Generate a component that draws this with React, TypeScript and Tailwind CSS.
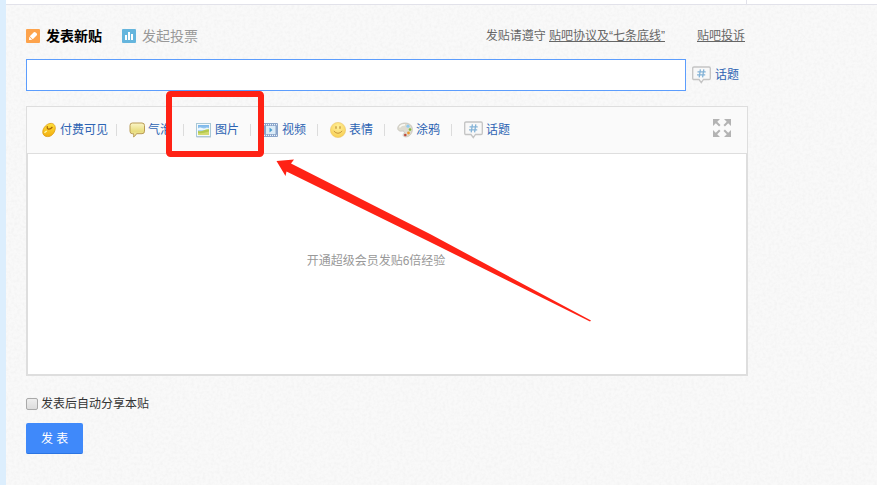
import type { ReactNode } from 'react';

const PencilIcon = () => (
  <svg width="14" height="14" viewBox="0 0 14 14" className="shrink-0">
    <rect width="14" height="14" rx="1" fill="#fda34c" />
    <path d="M3 11 L3.3 7.8 L6.2 10.7 Z M3.8 7.2 L7.8 3.2 Q8.7 2.5 9.7 3.4 L10.6 4.3 Q11.5 5.3 10.8 6.2 L6.8 10.2 Z" fill="#fff" />
  </svg>
);

const PollIcon = () => (
  <svg width="14" height="14" viewBox="0 0 14 14" className="shrink-0">
    <rect width="14" height="14" rx="1" fill="#65b5dd" />
    <path d="M3 6h2v5h-2z M6 3h2v8h-2z M9 5h2v6h-2z" fill="#fff" />
  </svg>
);

const TopicIcon = () => (
  <svg width="19" height="18" viewBox="0 0 19 18" className="shrink-0">
    <path
      d="M2 1 H17 Q18.3 1 18.3 2.3 V12.2 Q18.3 13.5 17 13.5 H11.5 L9.3 16.7 L7 13.5 H2 Q.7 13.5 .7 12.2 V2.3 Q.7 1 2 1 Z"
      fill="#f8f8f8"
      stroke="#c4c4c4"
      strokeWidth="1.3"
    />
    <path d="M8.4 3.4 L7.2 11.4 M11.8 3.4 L10.6 11.4 M5.5 5.8 H13.7 M5 8.9 H13.2" stroke="#84b3d7" strokeWidth="1.3" fill="none" />
  </svg>
);

const BeanIcon = () => (
  <svg width="16" height="16" viewBox="0 0 16 16">
    <defs>
      <linearGradient id="bean" x1="0" y1="0" x2="0" y2="1">
        <stop offset="0" stopColor="#ffe03a" />
        <stop offset="1" stopColor="#f2ae10" />
      </linearGradient>
    </defs>
    <path d="M9 1.5 C12.5 .8 14.8 3.4 14.2 7.2 C13.4 11.4 10.3 14.8 6.5 14.6 C3 14.4 1.4 12.2 1.8 9.2 C2.3 5.5 5.5 2 9 1.5 Z" fill="url(#bean)" stroke="#dc9b10" strokeWidth=".8" />
    <path d="M6.4 4.2 C5.4 7.6 8.6 8.4 11.4 5" stroke="#a66408" strokeWidth="1.2" fill="none" />
    <path d="M3.6 11 Q4.2 9.4 6 9.2" stroke="#fff4a0" strokeWidth="1.3" fill="none" />
  </svg>
);

const BubbleIcon = () => (
  <svg width="16" height="16" viewBox="0 0 16 16">
    <defs>
      <linearGradient id="bubble" x1="0" y1="0" x2="0" y2="1">
        <stop offset="0" stopColor="#fbf6c9" />
        <stop offset=".6" stopColor="#e8dc7e" />
        <stop offset="1" stopColor="#f2ebaa" />
      </linearGradient>
    </defs>
    <path d="M3.3 1 H13 Q15.5 1 15.5 3.5 V9.2 Q15.5 11.7 13 11.7 H7.5 Q6.8 13.8 4.5 14.9 Q5.1 13 4.5 11.7 H3.3 Q1 11.7 1 9.2 V3.5 Q1 1 3.3 1 Z" fill="url(#bubble)" stroke="#b99b55" strokeWidth="1" />
  </svg>
);

const PictureIcon = () => (
  <svg width="16" height="16" viewBox="0 0 16 16">
    <defs>
      <linearGradient id="sky" x1="0" y1="0" x2="0" y2="1">
        <stop offset="0" stopColor="#7ab6ea" />
        <stop offset="1" stopColor="#d7eefa" />
      </linearGradient>
    </defs>
    <rect x=".5" y="1.5" width="14" height="13" fill="#f4fafc" stroke="#a9c8d6" />
    <path d="M.5 15.3 H15" stroke="#c9d3da" strokeWidth=".8" />
    <rect x="2" y="3" width="11" height="10" fill="url(#sky)" />
    <path d="M2 6.5 Q4 4.8 6 6 T11 5.5 L13 6.5 V8 H2 Z" fill="#eef8fc" />
    <path d="M2 9 Q5 9.8 8 8.3 T13 7.3 V13 H2 Z" fill="#b3c94f" />
    <path d="M2 11 Q6 11.6 13 9.5 V13 H2 Z" fill="#d2da70" />
  </svg>
);

const VideoIcon = () => (
  <svg width="16" height="16" viewBox="0 0 16 16">
    <rect x="0" y="1" width="15" height="14" rx="1" fill="#8ba5ca" />
    <path d="M1 2.7 H14.5 M1 13.3 H14.5" stroke="#eaf2fb" strokeWidth="1.2" strokeDasharray="1 1" />
    <rect x="3" y="4" width="9.5" height="8" fill="#dcecf8" />
    <path d="M6.5 5.5 L9.5 8 L6.5 10.5 Z" fill="#4c9ed0" />
  </svg>
);

const SmileIcon = () => (
  <svg width="16" height="16" viewBox="0 0 16 16">
    <defs>
      <radialGradient id="face" cx=".5" cy=".3" r=".7">
        <stop offset="0" stopColor="#fff09a" />
        <stop offset="1" stopColor="#f8cf52" />
      </radialGradient>
    </defs>
    <circle cx="8" cy="8" r="7.6" fill="url(#face)" stroke="#ebc566" strokeWidth=".6" />
    <path d="M6 4.2 V6.8 M10 4.2 V6.8" stroke="#bd8d35" strokeWidth="1.2" />
    <path d="M3.8 9 Q8 13.6 12.2 9" stroke="#c6963a" strokeWidth="1" fill="none" />
  </svg>
);

const PaletteIcon = () => (
  <svg width="16" height="16" viewBox="0 0 16 16">
    <path d="M.8 5.5 C1.6 2 6 .5 10 1.2 C14 2 16 5 15.2 9 C14.4 13 11 15.4 8 14.8 C5.5 14.3 5.8 12.7 7 11.4 C8 10 6.7 8.6 5 9.1 C2.5 9.6 .2 8.2 .8 5.5 Z" fill="#dedbd0" stroke="#bfbcb1" strokeWidth=".7" />
    <path d="M2.5 5.5 Q4 2.7 8 2.7" stroke="#fafaf4" strokeWidth="1.5" fill="none" />
    <circle cx="11" cy="4.2" r="1.6" fill="#8fcaee" />
    <circle cx="13" cy="7.6" r="1.3" fill="#82b93e" />
    <circle cx="11.5" cy="11" r="1.4" fill="#ee9a2e" />
    <circle cx="8.3" cy="13" r="1.3" fill="#c0483a" />
  </svg>
);

const ExpandIcon = () => (
  <svg width="18" height="18" viewBox="0 0 18 18" fill="#b3b3b3" stroke="#b3b3b3" strokeWidth="2">
    <path d="M0 0 H7 L0 7 Z M18 0 H11 L18 7 Z M0 18 H7 L0 11 Z M18 18 H11 L18 11 Z" stroke="none" />
    <path d="M2 2 L6.8 6.8 M16 2 L11.2 6.8 M2 16 L6.8 11.2 M16 16 L11.2 11.2" />
  </svg>
);

const tools: { label: string; icon: ReactNode; width: string }[] = [
  { label: '付费可见', icon: <BeanIcon />, width: 'w-[75px]' },
  { label: '气泡', icon: <BubbleIcon />, width: 'w-[67px]' },
  { label: '图片', icon: <PictureIcon />, width: 'w-[67px]' },
  { label: '视频', icon: <VideoIcon />, width: 'w-[67px]' },
  { label: '表情', icon: <SmileIcon />, width: 'w-[67px]' },
  { label: '涂鸦', icon: <PaletteIcon />, width: 'w-[67px]' },
  { label: '话题', icon: <TopicIcon />, width: 'w-[67px]' },
];

// Paper grain behind the form
function Grain() {
  return (
    <svg className="absolute inset-0 w-full h-full pointer-events-none" aria-hidden="true">
      <filter id="grain">
        <feTurbulence type="fractalNoise" baseFrequency="0.35" numOctaves="2" seed="4" />
        <feColorMatrix values="0 0 0 0 0.65  0 0 0 0 0.65  0 0 0 0 0.65  0.3 0 0 0 -0.11" />
      </filter>
      <rect width="100%" height="100%" filter="url(#grain)" />
    </svg>
  );
}

// Red frame and arrow drawn over the toolbar
function Annotation() {
  return (
    <svg className="absolute left-0 top-0 pointer-events-none" width="620" height="340" viewBox="0 0 620 340" aria-hidden="true">
      <rect x="169" y="94" width="92" height="60" rx="1.5" fill="none" stroke="#ff2215" strokeWidth="6" strokeLinejoin="round" />
      <path d="M276.5 161 L294 159.5 L291 163.5 L430 234 L591 320.5 L590 321.5 L428 241 L286.5 171.5 L285.5 176 Z" fill="#ff2215" />
    </svg>
  );
}

export default function App() {
  return (
    <div className="relative min-h-screen bg-[#f9f9f9] border-l-[6px] border-[#dceefd] text-xs text-[#333] font-['Liberation_Sans','Noto_Sans_CJK_SC',sans-serif]">
      <Grain />
      <div className="relative bg-white border-b border-[#e2e2ea]">
        <div className="max-w-[741px] h-1 border-r border-[#e2e2ea]" />
      </div>

      <form className="relative max-w-[722px] ml-5 pt-[21px] pb-8" onSubmit={(e) => e.preventDefault()}>
        {/* Tabs */}
        <div className="flex items-center justify-between">
          <div className="flex items-center gap-5 text-sm leading-5">
            <button type="button" className="flex items-center gap-1.5 font-bold text-black">
              <PencilIcon />
              发表新贴
            </button>
            <button type="button" className="flex items-center gap-1.5 text-[#999]">
              <PollIcon />
              发起投票
            </button>
          </div>
          <div className="flex items-center gap-8 pr-[3px] text-[#666]">
            <span>
              发贴请遵守 <a href="#rules" className="underline">贴吧协议及“七条底线”</a>
            </span>
            <a href="#complaint" className="underline">贴吧投诉</a>
          </div>
        </div>

        {/* Title */}
        <div className="flex items-center gap-1.5 mt-[13px] pr-[9px]">
          <input type="text" aria-label="标题" className="flex-1 min-w-0 h-8 px-2 bg-white border border-[#5c9dfd] outline-none text-sm" />
          <button type="button" className="flex items-center gap-1 text-[#2d64b3]">
            <TopicIcon />
            话题
          </button>
        </div>

        {/* Editor */}
        <div className="mt-[15px] border border-[#dedede]">
          <div className="flex items-center justify-between h-[47px] pl-3.5 pr-4 bg-[#fafafa] border-b border-[#dedede]">
            <ul className="flex items-center">
              {tools.map(({ label, icon, width }, i) => (
                <li key={label} className={`flex items-center shrink-0 ${width}`}>
                  {i > 0 && <span className="w-px h-3 mr-3 bg-[#dcdcdc]" />}
                  <button type="button" className="flex items-center gap-[3px] shrink-0 whitespace-nowrap text-[#2d64b3]">
                    {icon}
                    {label}
                  </button>
                </li>
              ))}
            </ul>
            <button type="button" aria-label="全屏" className="pb-1">
              <ExpandIcon />
            </button>
          </div>
          <div className="relative border border-t-0 border-[#dedede]">
            <textarea id="content" className="block w-full h-[220px] p-2 bg-white resize-none outline-none" />
            <label htmlFor="content" className="absolute inset-0 flex items-center justify-center pr-[22px] pb-1.5 text-[#999]">
              开通超级会员发贴6倍经验
            </label>
          </div>
        </div>

        {/* Submit */}
        <label className="flex items-center gap-[3px] mt-5 w-fit">
          <input
            type="checkbox"
            className="appearance-none w-3 h-3 rounded-xs border border-[#a9a9a9] bg-linear-to-b from-[#eee] to-[#dcdcdc]"
          />
          发表后自动分享本贴
        </label>
        <button type="submit" className="block mt-[11px] px-[15px] pt-2 pb-1.5 rounded-xs bg-[#3f89fa] border-b border-[#2b74e2] text-white">
          发 表
        </button>
      </form>

      <div className="absolute top-0 -left-1.5">
        <Annotation />
      </div>
    </div>
  );
}
